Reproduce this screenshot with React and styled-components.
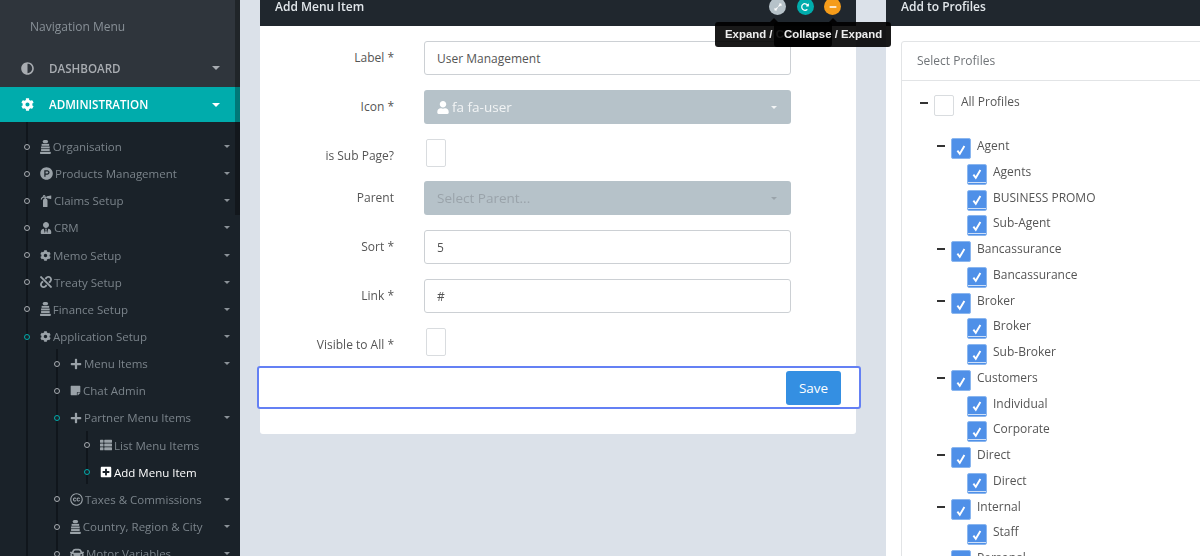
import styled, { createGlobalStyle } from "styled-components";
import {
  FaAdjust,
  FaCog,
  FaProductHunt,
  FaFireExtinguisher,
  FaUserTie,
  FaUnlink,
  FaPlus,
  FaStickyNote,
  FaThList,
  FaPlusSquare,
  FaCreativeCommons,
  FaCar,
  FaUser,
  FaExpandAlt,
  FaRedoAlt,
  FaMinus,
} from "react-icons/fa";

const GlobalStyle = createGlobalStyle`
  html, body {
    margin: 0;
    padding: 0;
    height: 100%;
    overflow: hidden;
    background: #dbe1e9;
    font-family: "Open Sans", "Liberation Sans", sans-serif;
    font-size: 12px;
    color: #555;
  }
  * { box-sizing: border-box; }
`;

// the stacked glyph used for Organisation / Finance / Country
const StackIcon = () => (
  <svg viewBox="0 0 10 13" fill="currentColor">
    <rect x="2.5" y="0" width="5" height="3" rx="1.5" />
    <rect x="1.5" y="3.6" width="7" height="1.8" />
    <rect x="1" y="6" width="8" height="1.8" />
    <rect x="1" y="8.4" width="8" height="1.8" />
    <rect x="0" y="10.8" width="10" height="2.2" rx="0.6" />
  </svg>
);

const TickIcon = () => (
  <svg viewBox="0 0 12 12" fill="none" stroke="currentColor" strokeWidth="1.9">
    <path d="M2.4 6.6 L4.8 9.8 L9.4 2" />
  </svg>
);

const menu = [
  { icon: StackIcon, label: "Organisation", caret: true, h: 14 },
  { icon: FaProductHunt, label: "Products Management", caret: true, h: 13 },
  { icon: FaFireExtinguisher, label: "Claims Setup", caret: true },
  { icon: FaUserTie, label: "CRM", caret: true },
  { icon: FaCog, label: "Memo Setup", caret: true, h: 11 },
  { icon: FaUnlink, label: "Treaty Setup", caret: true, h: 12 },
  { icon: StackIcon, label: "Finance Setup", caret: true, h: 14 },
  { icon: FaCog, label: "Application Setup", caret: true, open: true, h: 11 },
  { icon: FaPlus, label: "Menu Items", caret: true, level: 1 },
  { icon: FaStickyNote, label: "Chat Admin", level: 1, h: 11 },
  { icon: FaPlus, label: "Partner Menu Items", caret: true, level: 1, open: true },
  { icon: FaThList, label: "List Menu Items", level: 2 },
  { icon: FaPlusSquare, label: "Add Menu Item", level: 2, open: true, active: true },
  { icon: FaCreativeCommons, label: "Taxes & Commissions", caret: true, level: 1, h: 13 },
  { icon: StackIcon, label: "Country, Region & City", caret: true, level: 1, h: 14 },
  { icon: FaCar, label: "Motor Variables", caret: true, level: 1, h: 14 },
];

const tree = [
  { label: "Agent", kids: ["Agents", "BUSINESS PROMO", "Sub-Agent"] },
  { label: "Bancassurance", kids: ["Bancassurance"] },
  { label: "Broker", kids: ["Broker", "Sub-Broker"] },
  { label: "Customers", kids: ["Individual", "Corporate"] },
  { label: "Direct", kids: ["Direct"] },
  { label: "Internal", kids: ["Staff"] },
  { label: "Personal", kids: [] },
];

const App = () => {
  return (
    <Page>
      <GlobalStyle />
      <Sidebar>
        <NavTitle>Navigation Menu</NavTitle>
        <TopItem>
          <FaAdjust />
          <span>DASHBOARD</span>
          <Caret />
        </TopItem>
        <TopItem $active>
          <FaCog />
          <span>ADMINISTRATION</span>
          <Caret />
        </TopItem>
        <SubMenu>
          <Rail $left={26} $top={0} $height={434} />
          <Rail $left={56} $top={227} $height={207} />
          <Rail $left={86} $top={309} $height={53} />
          {menu.map((item) => (
            <SubItem
              key={item.label}
              $level={item.level || 0}
              $active={item.active}
              $iconHeight={item.h || 12}
            >
              <Dot $open={item.open} $level={item.level || 0} />
              <item.icon />
              <SubLabel>{item.label}</SubLabel>
              {item.caret && <Caret $small />}
            </SubItem>
          ))}
        </SubMenu>
        <ScrollThumb />
      </Sidebar>

      <Main>
        <FormPanel>
          <PanelHeader>
            <PanelTitle>Add Menu Item</PanelTitle>
            <HeaderTools>
              <RoundTool $color="#b6c2c9">
                <FaExpandAlt />
              </RoundTool>
              <RoundTool $color="#00acac">
                <FaRedoAlt />
              </RoundTool>
              <RoundTool $color="#f59c1a">
                <FaMinus />
              </RoundTool>
            </HeaderTools>
            <Tooltip $left={455}>Expand / Collapse</Tooltip>
            <Tooltip $left={514}>Collapse / Expand</Tooltip>
          </PanelHeader>
          <FormBody>
            <FormRow>
              <FieldLabel>Label *</FieldLabel>
              <TextField>User Management</TextField>
            </FormRow>
            <FormRow>
              <FieldLabel>Icon *</FieldLabel>
              <SelectField>
                <FaUser />
                <IconValue>fa fa-user</IconValue>
                <Caret $small />
              </SelectField>
            </FormRow>
            <FormRow $check>
              <FieldLabel>is Sub Page?</FieldLabel>
              <CheckBox />
            </FormRow>
            <FormRow>
              <FieldLabel>Parent</FieldLabel>
              <SelectField $muted>
                <ParentValue>Select Parent...</ParentValue>
                <Caret $small />
              </SelectField>
            </FormRow>
            <FormRow>
              <FieldLabel>Sort *</FieldLabel>
              <TextField>5</TextField>
            </FormRow>
            <FormRow>
              <FieldLabel>Link *</FieldLabel>
              <TextField>#</TextField>
            </FormRow>
            <FormRow $check $last>
              <FieldLabel>Visible to All *</FieldLabel>
              <CheckBox />
            </FormRow>
            <SaveRow>
              <SaveButton>Save</SaveButton>
            </SaveRow>
          </FormBody>
        </FormPanel>

        <ProfilePanel>
          <PanelHeader>
            <PanelTitle>Add to Profiles</PanelTitle>
          </PanelHeader>
          <ProfileBody>
            <ProfileCard>
              <CardHead>Select Profiles</CardHead>
              <TreeBody>
                <RootNode>
                  <Toggle />
                  <TreeCheck />
                  <NodeLabel>All Profiles</NodeLabel>
                </RootNode>
                {tree.map((group) => (
                  <div key={group.label}>
                    <GroupNode>
                      <Toggle />
                      <TreeCheck $checked>
                        <TickIcon />
                      </TreeCheck>
                      <NodeLabel>{group.label}</NodeLabel>
                    </GroupNode>
                    {group.kids.map((kid) => (
                      <ChildNode key={kid}>
                        <TreeCheck $checked $child>
                          <TickIcon />
                        </TreeCheck>
                        <NodeLabel>{kid}</NodeLabel>
                      </ChildNode>
                    ))}
                  </div>
                ))}
              </TreeBody>
            </ProfileCard>
          </ProfileBody>
        </ProfilePanel>
      </Main>
    </Page>
  );
};

const Page = styled.div`
  display: flex;
  width: 1200px;
  height: 556px;
  overflow: hidden;
  filter: blur(0.35px);
`;

const Sidebar = styled.aside`
  position: relative;
  flex: none;
  width: 240px;
  height: 556px;
  overflow: hidden;
  background: #2f353c;
`;

const ScrollThumb = styled.div`
  position: absolute;
  top: 0;
  right: 0;
  width: 5px;
  height: 215px;
  background: rgba(0, 0, 0, 0.3);
`;

const NavTitle = styled.div`
  height: 50px;
  padding: 18px 0 0 30px;
  font-size: 12px;
  line-height: 18px;
  color: #889097;
`;

const TopItem = styled.div`
  display: flex;
  align-items: center;
  height: ${({ $active }) => ($active ? "35px" : "36px")};
  padding: 0 20px 0 21px;
  margin-top: ${({ $active }) => ($active ? "1px" : "0")};
  font-size: 11.6px;
  font-weight: 600;
  background: ${({ $active }) => ($active ? "#00acac" : "transparent")};
  color: ${({ $active }) => ($active ? "#fff" : "#a8acb1")};

  svg {
    flex: none;
    width: 13px;
    height: 13px;
  }

  span:first-of-type {
    flex: 1;
    margin-left: 15px;
  }
`;

const Caret = styled.i`
  flex: none;
  width: 0;
  height: 0;
  margin-left: auto;
  border-left: ${({ $small }) => ($small ? "3.5px" : "4px")} solid transparent;
  border-right: ${({ $small }) => ($small ? "3.5px" : "4px")} solid transparent;
  border-top: ${({ $small }) => ($small ? "3.5px" : "4px")} solid currentColor;
`;

const SubMenu = styled.div`
  position: relative;
  height: 434px;
  padding-top: 11px;
  background: #1a2229;
`;

const Rail = styled.div`
  position: absolute;
  left: ${({ $left }) => $left}px;
  top: ${({ $top }) => $top}px;
  height: ${({ $height }) => $height}px;
  width: 2px;
  background: #10161c;
`;

const SubItem = styled.div`
  position: relative;
  display: flex;
  align-items: center;
  height: 27.15px;
  padding-left: ${({ $level }) => 40 + $level * 30}px;
  padding-right: 10px;
  font-size: 11.5px;
  color: ${({ $active }) => ($active ? "#fff" : "#7b848b")};

  svg {
    flex: none;
    width: auto;
    height: ${({ $iconHeight }) => $iconHeight}px;
    color: ${({ $active }) => ($active ? "#fff" : "#9aa2a8")};
  }

  ${Caret} {
    color: #8b9298;
  }
`;

const Dot = styled.i`
  position: absolute;
  left: ${({ $level }) => 24 + $level * 30}px;
  top: 50%;
  width: 6px;
  height: 6px;
  margin-top: -3px;
  border-radius: 50%;
  border: 1px solid ${({ $open }) => ($open ? "#00acac" : "#a8acb1")};
  background: #1a2229;
`;

const SubLabel = styled.span`
  margin-left: 2px;
  white-space: nowrap;
`;

const Main = styled.main`
  display: flex;
  flex: 1;
  gap: 30px;
  padding-left: 20px;
  min-width: 0;
`;

const FormPanel = styled.section`
  flex: none;
  width: 596px;
  height: 434px;
  background: #fff;
  border-radius: 0 0 3px 3px;
`;

const ProfilePanel = styled.section`
  flex: 1;
  min-width: 0;
  height: 556px;
  background: #fff;
`;

const PanelHeader = styled.header`
  position: relative;
  display: flex;
  align-items: flex-start;
  height: 26px;
  padding: 0 15px;
  background: #20272e;
`;

const PanelTitle = styled.h4`
  margin: 0;
  font-size: 12px;
  font-weight: 600;
  line-height: 13px;
  color: #e2e7eb;
`;

const HeaderTools = styled.div`
  display: flex;
  gap: 10.5px;
  margin-left: auto;
  margin-top: -2px;
`;

const RoundTool = styled.span`
  display: flex;
  align-items: center;
  justify-content: center;
  width: 17px;
  height: 17px;
  border-radius: 50%;
  background: ${({ $color }) => $color};
  color: #fff;

  svg {
    width: 8px;
    height: 8px;
  }
`;

const Tooltip = styled.div`
  position: absolute;
  left: ${({ $left }) => $left}px;
  top: 22px;
  z-index: 5;
  height: 25px;
  padding: 0 9px 0 10px;
  border-radius: 3px;
  background: rgba(0, 0, 0, 0.9);
  font-family: "Liberation Sans", Arial, sans-serif;
  font-size: 11.4px;
  font-weight: 700;
  line-height: 25px;
  color: #eee;
  white-space: nowrap;

  &::before {
    content: "";
    position: absolute;
    left: 50%;
    top: -4px;
    margin-left: -4px;
    border-left: 4px solid transparent;
    border-right: 4px solid transparent;
    border-bottom: 4px solid rgba(0, 0, 0, 0.9);
  }
`;

const FormBody = styled.div`
  padding-top: 15px;
`;

const FormRow = styled.div`
  display: grid;
  grid-template-columns: 134px 367px;
  column-gap: 30px;
  align-items: start;
  height: ${({ $check }) => ($check ? "28px" : "34px")};
  margin-bottom: ${({ $check, $last }) => ($last ? "10px" : $check ? "14px" : "15px")};
`;

const FieldLabel = styled.label`
  padding-top: 8px;
  text-align: right;
  font-size: 12px;
  line-height: 17px;
  color: #555;
`;

const TextField = styled.div`
  height: 34px;
  padding: 0 12px;
  border: 1px solid #ccd0d4;
  border-radius: 3px;
  font-size: 12px;
  line-height: 33px;
  color: #555;
`;

const SelectField = styled.div`
  display: flex;
  align-items: center;
  height: 34px;
  padding: 0 14px 0 13px;
  border-radius: 3px;
  background: #b6c2c9;
  color: ${({ $muted }) => ($muted ? "#9aa3aa" : "#f2f4f5")};
  font-size: 13.5px;

  svg {
    width: 12px;
    height: 13px;
    margin-right: 3px;
    color: #fff;
  }
`;

const IconValue = styled.span`
  color: #f2f4f5;
`;

const ParentValue = styled.span`
  color: #9aa3aa;
`;

const CheckBox = styled.div`
  width: 20px;
  height: 28px;
  margin-left: 2px;
  border: 1px solid #d9dcdf;
  border-radius: 2px;
`;

const SaveRow = styled.div`
  display: flex;
  justify-content: flex-end;
  align-items: center;
  width: 604px;
  height: 43px;
  margin-left: -3px;
  padding-right: 18px;
  border: 2px solid #6480f4;
  border-radius: 3px;
  background: #fff;
  position: relative;
`;

const SaveButton = styled.button`
  width: 55px;
  height: 34px;
  border: 0;
  border-radius: 3px;
  background: #348fe2;
  color: #fff;
  font-family: inherit;
  font-size: 13.5px;
`;

const ProfileBody = styled.div`
  padding: 15px 0 0 15px;
  overflow: hidden;
`;

const ProfileCard = styled.div`
  width: 340px;
  border: 1px solid #e2e4e6;
  border-radius: 3px 0 0 0;
`;

const CardHead = styled.div`
  height: 39px;
  padding: 0 15px;
  border-bottom: 1px solid #e2e4e6;
  font-size: 12px;
  line-height: 38px;
  color: #707478;
`;

const TreeBody = styled.div`
  padding: 14px 0 0 18px;
`;

const NodeLabel = styled.span`
  margin-left: 6px;
  font-size: 12px;
  line-height: 16px;
  color: #555;
`;

const RootNode = styled.div`
  display: flex;
  height: 28px;
  margin-bottom: 15px;

  ${NodeLabel} {
    margin: -1px 0 0 7px;
  }
`;

const GroupNode = styled.div`
  display: flex;
  align-items: flex-start;
  height: 25.77px;
  margin-left: 17px;
`;

const ChildNode = styled.div`
  display: flex;
  align-items: flex-start;
  height: 25.77px;
  margin-left: 47px;
`;

const Toggle = styled.i`
  flex: none;
  width: 8px;
  height: 2px;
  margin: 7px 6px 0 0;
  background: #333;
`;

const TreeCheck = styled.span`
  display: flex;
  flex: none;
  align-items: center;
  justify-content: center;
  width: 20px;
  height: 21px;
  border: 1px solid ${({ $checked }) => ($checked ? "#8ab6ef" : "#d9dcdf")};
  border-radius: 2px;
  background: ${({ $checked, $child }) =>
    $checked
      ? $child
        ? "linear-gradient(#4f90e8 89%, #cfe0f8 89%, #cfe0f8 95%, #4f90e8 95%)"
        : "#4f90e8"
      : "#fff"};
  color: #fff;

  svg {
    width: 12px;
    height: 12px;
    margin-top: ${({ $child }) => ($child ? "0" : "3px")};
  }
`;

export default App;
